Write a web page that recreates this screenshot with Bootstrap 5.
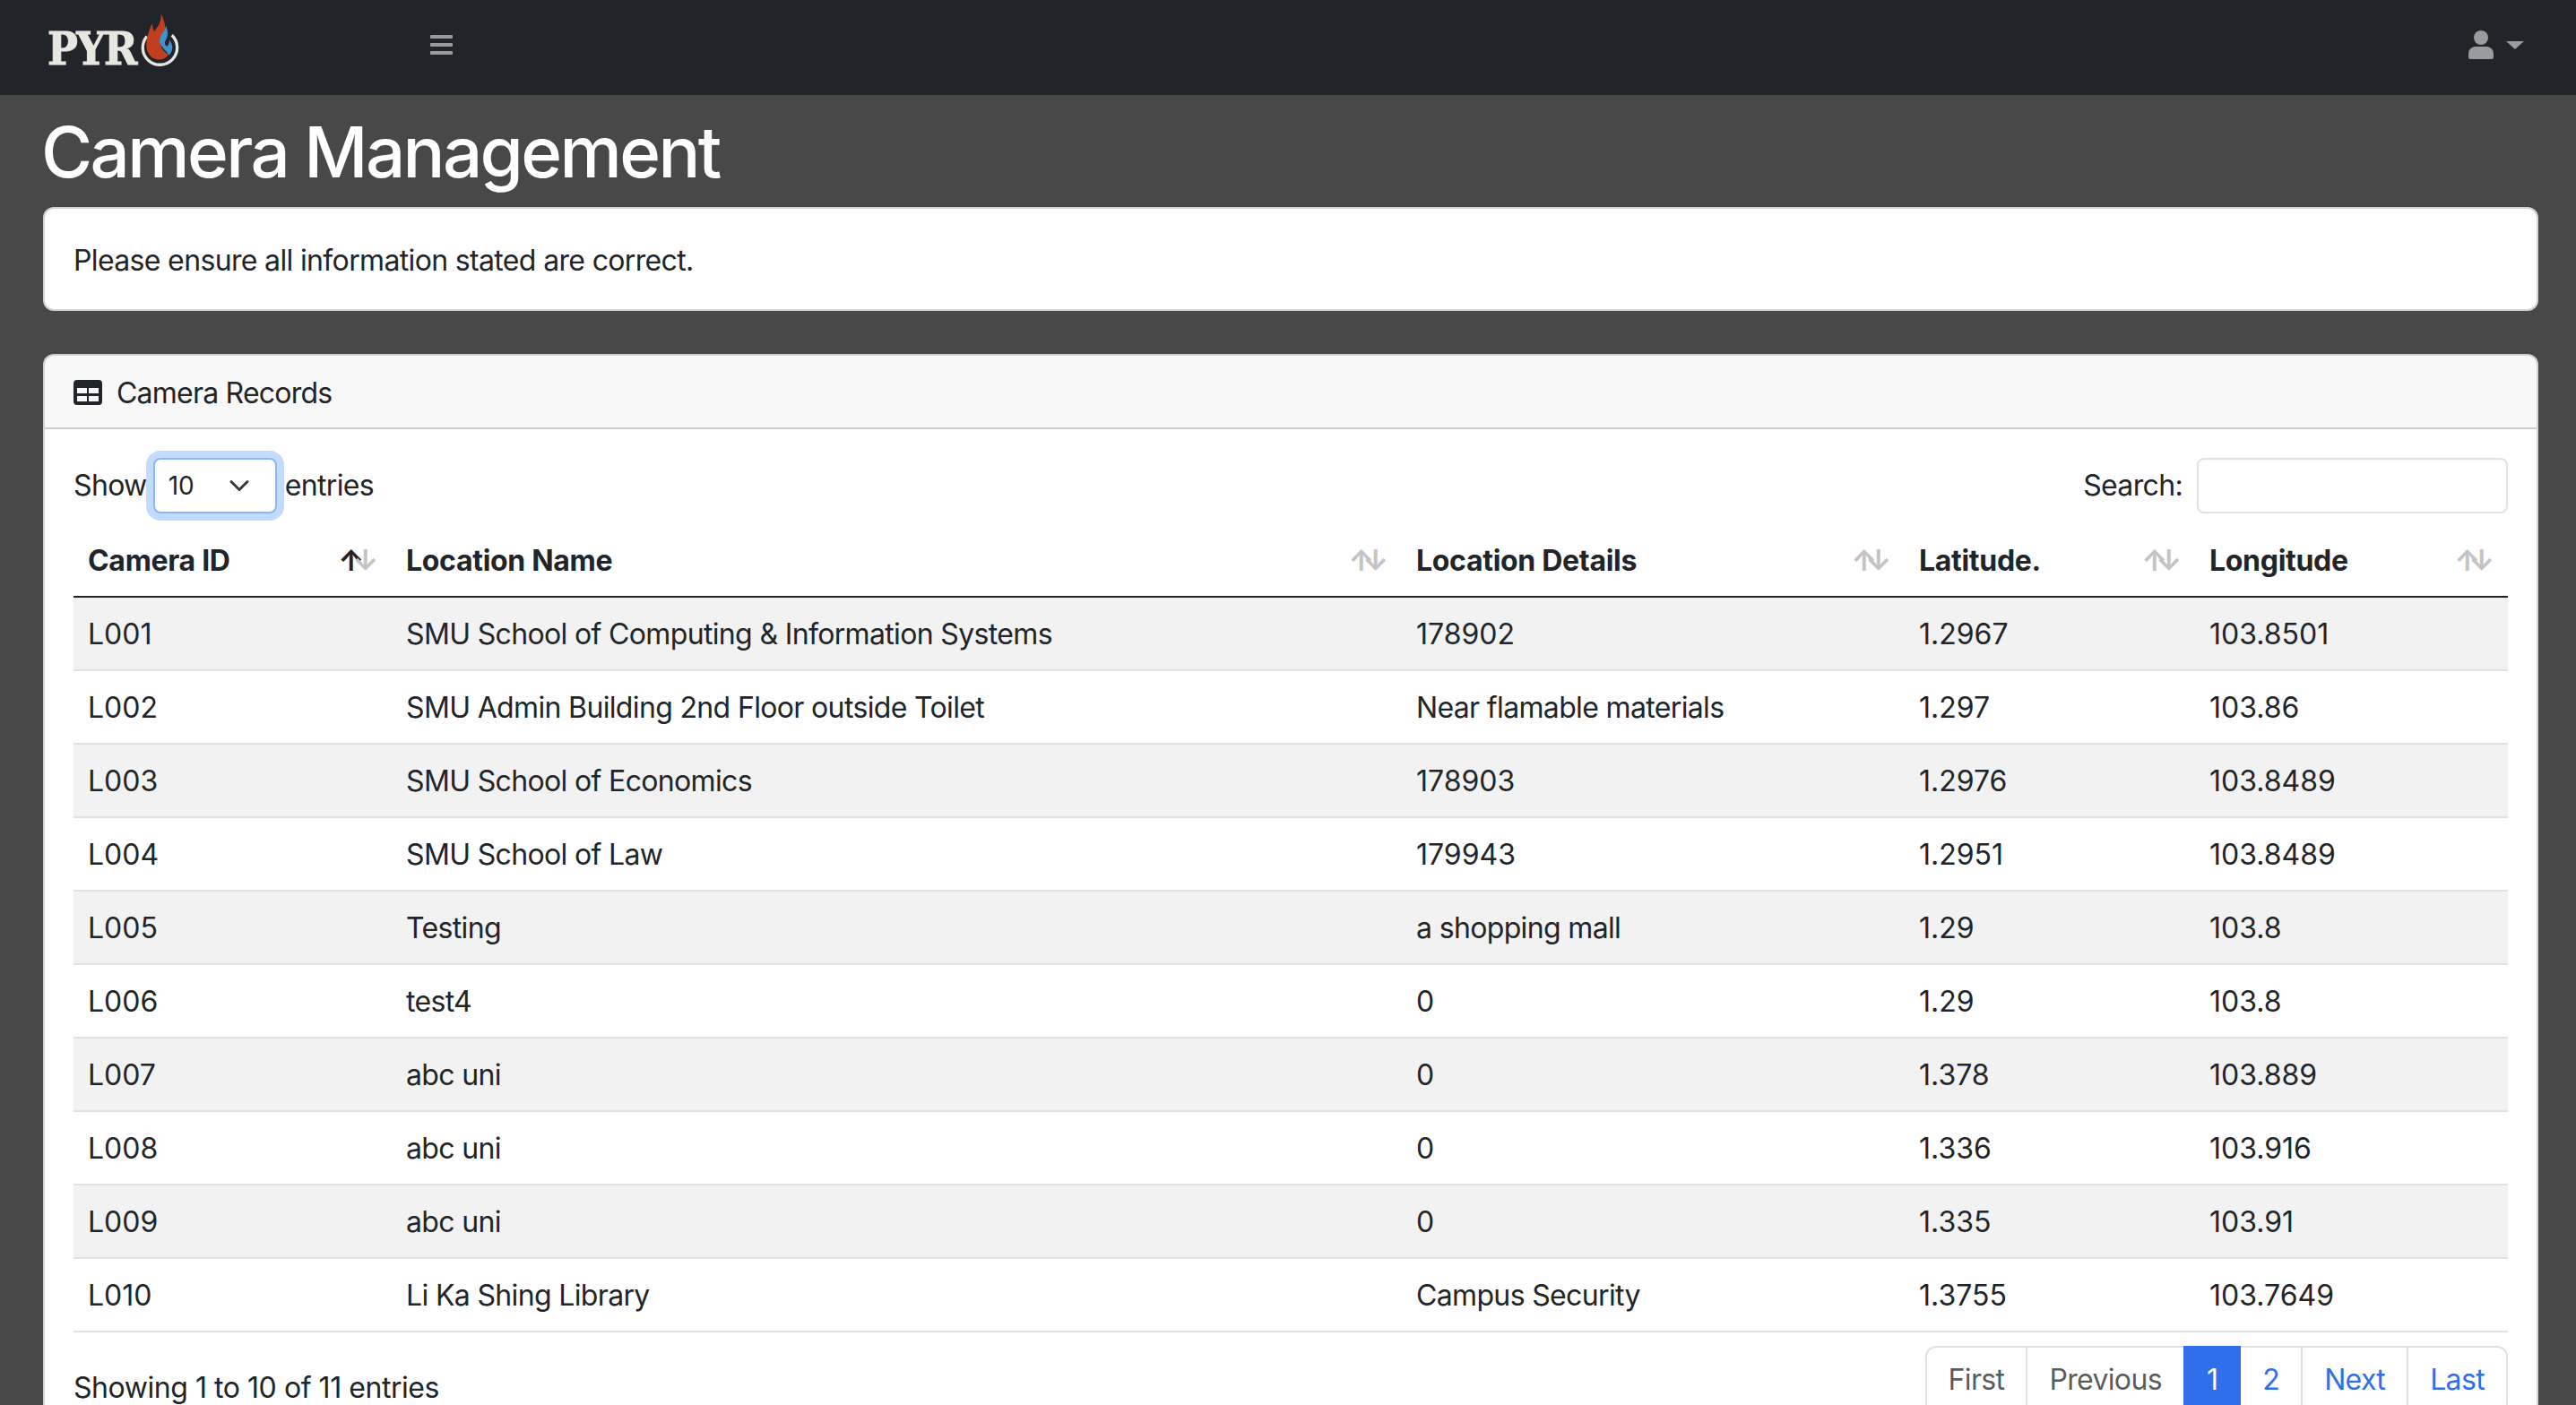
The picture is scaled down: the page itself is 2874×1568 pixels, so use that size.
<!DOCTYPE html>
<html lang="en">

<head>
    <meta charset="UTF-8">
    <meta name="viewport" content="width=device-width, initial-scale=1.0">
    <title>Camera Management</title>
    <link rel="stylesheet" href="https://cdn.jsdelivr.net/npm/bootstrap@5.3.3/dist/css/bootstrap.min.css">
    <script src="https://cdn.jsdelivr.net/npm/bootstrap@5.3.3/dist/js/bootstrap.bundle.min.js"></script>
    <style>
        :root {
            --bs-border-width: 2px;
        }

        html {
            font-size: 32px;
            overflow: hidden;
        }

        body {
            background: #484848;
            font-family: Inter, "Liberation Sans", sans-serif;
            letter-spacing: -.65px;
            overflow: hidden;
        }

        .top-bar {
            height: 106px;
            padding: 0 58px 6px 53px;
        }

        .brand-logo {
            width: 427px;
        }

        .brand-text {
            font-family: "DejaVu Serif Condensed", "DejaVu Serif", serif;
            font-weight: 700;
            font-size: 50px;
            line-height: 1;
            letter-spacing: -1.5px;
            color: #e8e6e1;
            -webkit-text-stroke: 1px #e8e6e1;
            margin-top: 9px;
        }

        .brand-flame {
            width: 48px;
            height: 63px;
            margin: -12px 0 0 1px;
        }

        .user-menu {
            gap: 14px;
        }

        .main-wrap {
            padding: 0 42px 0 48px;
        }

        .page-title {
            margin: 16px 0 13px -2px;
            color: #fff;
            font-size: 78px;
            line-height: 96px;
            letter-spacing: -2.6px;
        }

        .top-icon {
            fill: #9a9b9d;
        }

        .user-caret {
            width: 0;
            height: 0;
            border-top: 9px solid #9a9b9d;
            border-left: 10px solid transparent;
            border-right: 10px solid transparent;
        }

        .notice-body {
            padding-top: 34px;
            padding-bottom: 30px;
        }

        .records-head {
            padding-top: 18px;
            padding-bottom: 14px;
            letter-spacing: -.78px;
        }

        .title-icon {
            width: 32px;
            height: 28px;
            fill: #212529;
            margin-right: 16px;
            vertical-align: -2px;
        }

        .length-select {
            width: 138px;
            margin: 0 9px 0 7px;
            padding-left: 15px;
            background-size: 32px 24px;
            border-color: #86b7fe;
            box-shadow: 0 0 0 .25rem rgba(13, 110, 253, .25);
        }

        .search-input {
            width: 347px;
            height: 62px;
        }

        .camera-table {
            table-layout: fixed;
            margin-top: 12px;
            margin-bottom: 15px;
        }

        .camera-table th:nth-child(1) { width: 355px; }
        .camera-table th:nth-child(2) { width: 1127px; }
        .camera-table th:nth-child(3) { width: 561px; }
        .camera-table th:nth-child(4) { width: 324px; }

        .camera-table th,
        .camera-table td {
            padding-top: 17px;
            padding-bottom: 15px;
        }

        .camera-table td.num-cell {
            letter-spacing: 0;
        }

        .camera-table thead th {
            position: relative;
            letter-spacing: -.3px;
            border-bottom-color: #212529;
        }

        .camera-table thead th::before,
        .camera-table thead th::after {
            position: absolute;
            top: 17px;
            color: #c4c4c4;
        }

        .camera-table thead th::before {
            content: "\2191";
            right: 31px;
        }

        .camera-table thead th::after {
            content: "\2193";
            right: 15px;
        }

        .camera-table thead th.sort-on::before {
            color: #212529;
        }

        .camera-table tbody tr:last-child td {
            border-bottom-color: #dee2e6;
        }

        .entries-info {
            padding-top: 23px;
            letter-spacing: -.45px;
        }

        .pagination {
            --bs-pagination-color: #2f6feb;
            --bs-pagination-disabled-bg: #fff;
            --bs-pagination-active-bg: #2f6feb;
            --bs-pagination-active-border-color: #2f6feb;
        }
    </style>
</head>

<body>
    <nav class="navbar navbar-dark bg-dark top-bar flex-nowrap justify-content-start">
        <a class="brand-logo d-flex align-items-center text-decoration-none" href="#">
            <span class="brand-text">PYR</span>
            <svg class="brand-flame" viewBox="375 45 145 190">
                <path d="M408 128A58 58 0 1 0 492 124" fill="none" stroke="#e8e6e1" stroke-width="10" />
                <path d="M455 50C470 85 475 100 462 125C450 150 450 170 480 190C465 215 425 212 410 180C400 150 412 115 425 85C428 100 430 105 432 112C445 95 458 80 455 50Z" fill="#bf3f1f" />
                <path d="M472 92C478 110 482 122 472 140C466 150 468 158 476 162C482 155 484 148 484 140C495 155 500 175 482 192C470 170 445 160 452 135C456 120 470 110 472 92Z" fill="#3f92d2" />
            </svg>
        </a>
        <svg class="top-icon" width="25" height="22" viewBox="0 0 25 22">
            <rect width="25" height="4" rx="1" />
            <rect y="9" width="25" height="4" rx="1" />
            <rect y="18" width="25" height="4" rx="1" />
        </svg>
        <div class="ms-auto d-flex align-items-center user-menu">
            <svg class="top-icon" width="28" height="32" viewBox="0 0 28 32">
                <circle cx="14" cy="8" r="8" />
                <path d="M8 18h12a8 8 0 0 1 8 8v4a2 2 0 0 1-2 2H2a2 2 0 0 1-2-2v-4a8 8 0 0 1 8-8Z" />
            </svg>
            <span class="user-caret"></span>
        </div>
    </nav>

    <main class="main-wrap">
        <h1 class="page-title">Camera Management</h1>

        <div class="card mb-4">
            <div class="card-body notice-body">Please ensure all information stated are correct.</div>
        </div>

        <div class="card">
            <div class="card-header records-head">
                <svg class="title-icon" viewBox="0 0 32 28">
                    <path fill-rule="evenodd" d="M4 0h24a4 4 0 0 1 4 4v20a4 4 0 0 1-4 4H4a4 4 0 0 1-4-4V4a4 4 0 0 1 4-4ZM4 9v6h11V9Zm13 0v6h11V9ZM4 18v6h11v-6Zm13 0v6h11v-6Z" />
                </svg>Camera Records
            </div>
            <div class="card-body">
                <div class="d-flex justify-content-between align-items-center">
                    <label class="d-flex align-items-center">Show
                        <select class="form-select form-select-sm length-select">
                            <option>10</option>
                            <option>25</option>
                            <option>50</option>
                            <option>100</option>
                        </select>
                        entries</label>
                    <label class="d-flex align-items-center gap-2">Search:
                        <input class="form-control form-control-sm search-input" type="search">
                    </label>
                </div>

                <table class="table table-striped camera-table">
                    <thead>
                        <tr>
                            <th class="sort-on">Camera ID</th>
                            <th>Location Name</th>
                            <th>Location Details</th>
                            <th>Latitude.</th>
                            <th>Longitude</th>
                        </tr>
                    </thead>
                    <tbody id="cameraRows"></tbody>
                </table>

                <div class="d-flex justify-content-between">
                    <div class="entries-info">Showing 1 to 10 of 11 entries</div>
                    <ul class="pagination mb-0">
                        <li class="page-item disabled"><a class="page-link" href="#">First</a></li>
                        <li class="page-item disabled"><a class="page-link" href="#">Previous</a></li>
                        <li class="page-item active"><a class="page-link" href="#">1</a></li>
                        <li class="page-item"><a class="page-link" href="#">2</a></li>
                        <li class="page-item"><a class="page-link" href="#">Next</a></li>
                        <li class="page-item"><a class="page-link" href="#">Last</a></li>
                    </ul>
                </div>
            </div>
        </div>
    </main>

    <script>
        const cameras = [
            ['L001', 'SMU School of Computing & Information Systems', '178902', '1.2967', '103.8501'],
            ['L002', 'SMU Admin Building 2nd Floor outside Toilet', 'Near flamable materials', '1.297', '103.86'],
            ['L003', 'SMU School of Economics', '178903', '1.2976', '103.8489'],
            ['L004', 'SMU School of Law', '179943', '1.2951', '103.8489'],
            ['L005', 'Testing', 'a shopping mall', '1.29', '103.8'],
            ['L006', 'test4', '0', '1.29', '103.8'],
            ['L007', 'abc uni', '0', '1.378', '103.889'],
            ['L008', 'abc uni', '0', '1.336', '103.916'],
            ['L009', 'abc uni', '0', '1.335', '103.91'],
            ['L010', 'Li Ka Shing Library', 'Campus Security', '1.3755', '103.7649']
        ]

        const cameraRows = document.getElementById('cameraRows')
        for (let i = 0; i < cameras.length; i++) {
            const tr = document.createElement('tr')
            for (let j = 0; j < cameras[i].length; j++) {
                const td = document.createElement('td')
                td.textContent = cameras[i][j]
                // ids and numbers keep the wider digit spacing
                if (/^[L\d.]+$/.test(cameras[i][j])) {
                    td.className = 'num-cell'
                }
                tr.appendChild(td)
            }
            cameraRows.appendChild(tr)
        }
    </script>
</body>

</html>
